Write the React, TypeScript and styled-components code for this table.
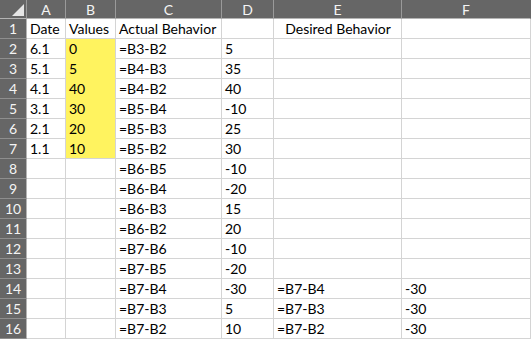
import React from "react";
import styled, { createGlobalStyle, css } from "styled-components";

const Global = createGlobalStyle`
  html, body { margin: 0; padding: 0; background: #ffffff; }
  body { font-family: Lato, "Open Sans", sans-serif; }
`;

const Sheet = styled.div`
  display: grid;
  grid-template-columns: 27px 39px 50px 106px 52px 128px 129px;
  grid-template-rows: 19px repeat(16, 20px);
  width: 531px;
  height: 339px;
  overflow: hidden;
  font-family: Lato, "Open Sans", sans-serif;
  font-size: 14px;
  color: #000;
`;

const Corner = styled.div`
  box-sizing: border-box;
  background: #666666;
  border-right: 1px solid #9a9a9a;
  border-bottom: 1px solid #b4b4b4;
  display: flex;
  align-items: flex-end;
  justify-content: flex-end;
  padding: 0 2px 2px 0;
`;

const ColHeader = styled.div<{ $last?: boolean }>`
  box-sizing: border-box;
  background: #666666;
  color: #f4f4f4;
  border-right: 1px solid ${(p) => (p.$last ? "#666666" : "#9a9a9a")};
  border-bottom: 1px solid #b4b4b4;
  display: flex;
  align-items: center;
  justify-content: center;
  font-size: 14px;
  line-height: 18px;
  padding-top: 1px;
`;

const RowHeader = styled.div`
  box-sizing: border-box;
  background: #666666;
  color: #f4f4f4;
  border-right: 1px solid #b4b4b4;
  border-bottom: 1px solid #8e8e8e;
  display: flex;
  align-items: flex-end;
  justify-content: center;
  font-size: 14px;
  line-height: 17px;
  padding-bottom: 1px;
`;

const Cell = styled.div<{ $fill?: boolean; $fillBelow?: boolean; $center?: boolean }>`
  box-sizing: border-box;
  border-right: 1px solid #d4d4d4;
  border-bottom: 1px solid #d4d4d4;
  display: flex;
  align-items: flex-end;
  justify-content: ${(p) => (p.$center ? "center" : "flex-start")};
  padding: 0 2px 1px 3px;
  white-space: nowrap;
  line-height: 17px;
  ${(p) =>
    p.$fill &&
    css`
      background: #fff35f;
    `}
  ${(p) =>
    p.$fillBelow &&
    css`
      border-bottom-color: #fff35f;
    `}
`;

type Row = string[];

const rows: Row[] = [
  ["Date", "Values", "Actual Behavior", "", "Desired Behavior", ""],
  ["6.1", "0", "=B3-B2", "5", "", ""],
  ["5.1", "5", "=B4-B3", "35", "", ""],
  ["4.1", "40", "=B4-B2", "40", "", ""],
  ["3.1", "30", "=B5-B4", "-10", "", ""],
  ["2.1", "20", "=B5-B3", "25", "", ""],
  ["1.1", "10", "=B5-B2", "30", "", ""],
  ["", "", "=B6-B5", "-10", "", ""],
  ["", "", "=B6-B4", "-20", "", ""],
  ["", "", "=B6-B3", "15", "", ""],
  ["", "", "=B6-B2", "20", "", ""],
  ["", "", "=B7-B6", "-10", "", ""],
  ["", "", "=B7-B5", "-20", "", ""],
  ["", "", "=B7-B4", "-30", "=B7-B4", "-30"],
  ["", "", "=B7-B3", "5", "=B7-B3", "-30"],
  ["", "", "=B7-B2", "10", "=B7-B2", "-30"],
];

const letters = ["A", "B", "C", "D", "E", "F"];

export default function App() {
  return (
    <>
      <Global />
      <Sheet>
        <Corner>
          <svg width="12" height="12" viewBox="0 0 12 12">
            <polygon points="12,0 12,12 0,12" fill="#e6e6e6" />
          </svg>
        </Corner>
        {letters.map((l, i) => (
          <ColHeader key={l} $last={i === letters.length - 1}>
            {l}
          </ColHeader>
        ))}
        {rows.map((row, r) => {
          const n = r + 1;
          return (
            <React.Fragment key={n}>
              <RowHeader>{n}</RowHeader>
              {row.map((v, c) => {
                const fill = c === 1 && n >= 2 && n <= 7;
                const fillBelow = c === 1 && n >= 2 && n <= 6;
                return (
                  <Cell
                    key={c}
                    $fill={fill}
                    $fillBelow={fillBelow}
                    $center={n === 1 && c === 4}
                  >
                    {v}
                  </Cell>
                );
              })}
            </React.Fragment>
          );
        })}
      </Sheet>
    </>
  );
}
